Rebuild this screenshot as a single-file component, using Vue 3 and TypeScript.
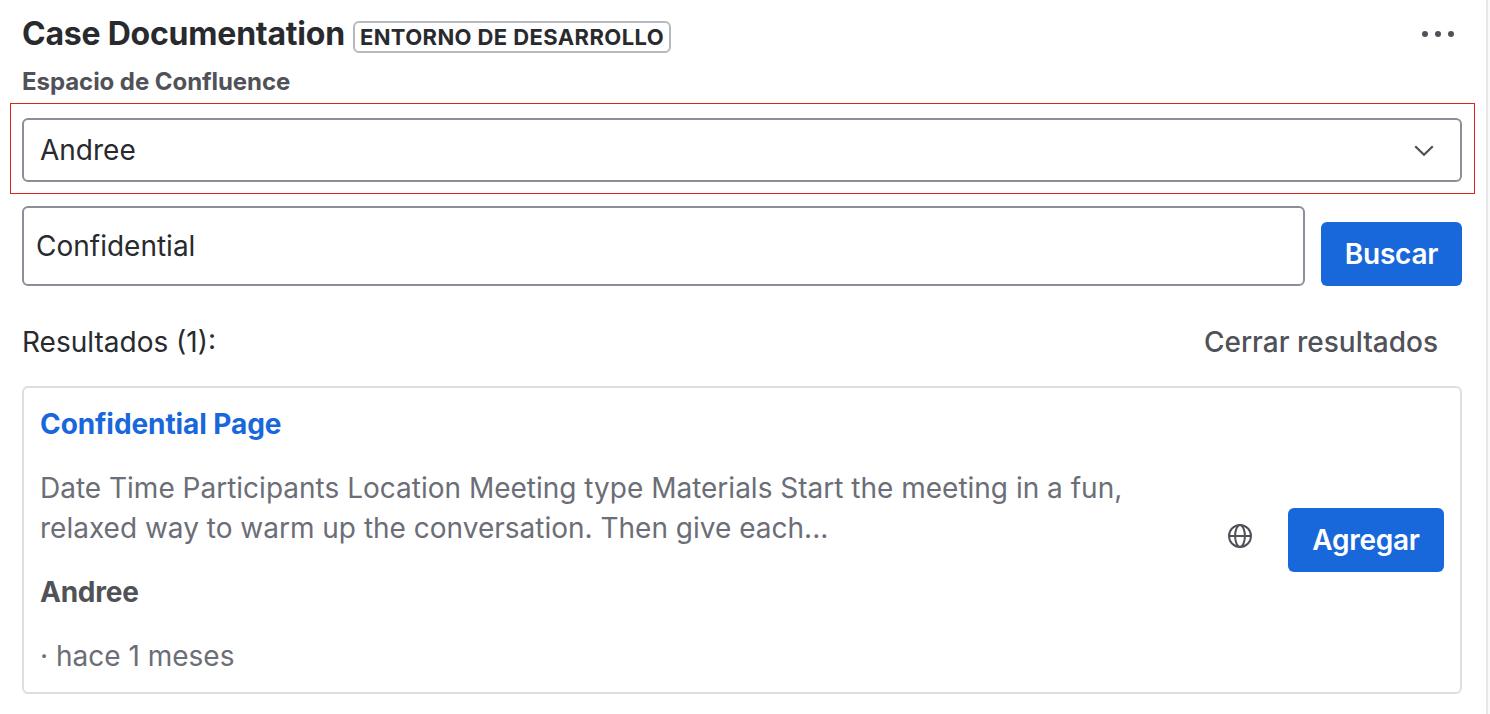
<script setup lang="ts">
  import { ref, computed } from 'vue';

  interface Result {
    id : number;
    title : string;
    excerpt : string;
    space : string;
    date : string;
  }

  const space = ref('Andree');
  const search = ref('Confidential');
  const showResults = ref(true);

  const pages : Result[] = [
    {
      id : 1,
      title : "Confidential Page",
      excerpt : "Date Time Participants Location Meeting type Materials Start the meeting in a fun, relaxed way to warm up the conversation. Then give each...",
      space : "Andree",
      date : "hace 1 meses"
    },
  ];

  const results = computed(() => showResults.value ? pages : []);

  const openResults = () => showResults.value = true;
  const closeResults = () => showResults.value = false;
</script>

<template>
  <div class="panel">
    <header class="header">
      <h1>Case Documentation</h1>
      <span class="env">ENTORNO DE DESARROLLO</span>
      <svg class="more" viewBox="0 0 32 32" fill="#505258">
        <circle cx="3" cy="16" r="3" />
        <circle cx="16" cy="16" r="3" />
        <circle cx="29" cy="16" r="3" />
      </svg>
    </header>
    <div class="label">Espacio de Confluence</div>
    <div class="space-zone">
      <div class="select">
        <span>{{ space }}</span>
        <svg class="chevron" viewBox="0 0 20 12" fill="none" stroke="#505258" stroke-width="2.2" stroke-linecap="square">
          <path d="M2 2 L10 9.8 L18 2" />
        </svg>
      </div>
    </div>
    <div class="search-row">
      <input v-model="search" type="text" class="search" />
      <button type="button" class="main-button buscar" @click="openResults">Buscar</button>
    </div>
    <div class="results-head">
      <span class="count">Resultados ({{ results.length }}):</span>
      <button type="button" class="close-button" @click="closeResults">Cerrar resultados</button>
    </div>
    <div v-for="page in results" :key="page.id" class="card">
      <div class="infos">
        <a class="page-title">{{ page.title }}</a>
        <p class="excerpt">{{ page.excerpt }}</p>
        <b class="page-space">{{ page.space }}</b>
        <span class="date">· {{ page.date }}</span>
      </div>
      <svg class="globe" viewBox="0 0 24 24" fill="none" stroke="#505258" stroke-width="2">
        <circle cx="12" cy="12" r="11" />
        <ellipse cx="12" cy="12" rx="4.9" ry="11" />
        <path d="M1 12 H23" />
      </svg>
      <button type="button" class="main-button agregar">Agregar</button>
    </div>
  </div>
</template>

<style>
  body {
    margin: 0;
    background-color: #fafafa;
  }
</style>

<style scoped>
  .panel {
    box-sizing: border-box;
    width: 1488px;
    height: 714px;
    padding: 14px 24px 0 22px;
    border-right: 2px solid #e8e8e8;
    background-color: white;
    color: #292a2e;
    font-family: Inter, sans-serif;
    font-size: 28px;
    line-height: 40px;
    overflow: hidden;
  }

  .header {
    display: flex;
    align-items: center;
    height: 40px;
  }

  h1 {
    margin: 0;
    font-size: 32px;
    font-weight: 700;
    letter-spacing: -0.22px;
    line-height: 40px;
  }

  .env {
    box-sizing: border-box;
    height: 32px;
    margin: 6px 0 0 8px;
    padding: 0 5px;
    border: 2px solid #b7b9be;
    border-radius: 6px;
    font-size: 22px;
    font-weight: 700;
    letter-spacing: 0.4px;
    line-height: 28px;
  }

  .more {
    width: 32px;
    height: 32px;
    margin-left: auto;
    margin-right: 8px;
  }

  .label {
    height: 32px;
    margin-top: 12px;
    color: #505258;
    font-size: 24px;
    font-weight: 700;
    letter-spacing: -0.06px;
    line-height: 32px;
  }

  .space-zone {
    box-sizing: border-box;
    height: 91px;
    margin: 5px -13px 0 -12px;
    padding: 14px 12px 0 11px;
    border: 1px solid #e2201c;
  }

  .select {
    box-sizing: border-box;
    display: flex;
    align-items: center;
    justify-content: space-between;
    height: 64px;
    padding: 0 26px 0 16px;
    border: 2px solid #8c8f97;
    border-radius: 6px;
  }

  .chevron {
    width: 20px;
    height: 12px;
    margin-top: 2px;
  }

  .search-row {
    display: flex;
    align-items: flex-end;
    gap: 16px;
    margin-top: 12px;
  }

  .search {
    box-sizing: border-box;
    flex: 1;
    min-width: 0;
    height: 80px;
    padding: 0 12px;
    border: 2px solid #8c8f97;
    border-radius: 6px;
    outline: none;
    background-color: white;
    color: #292a2e;
    font: inherit;
  }

  .main-button {
    flex: none;
    height: 64px;
    padding: 0;
    border: none;
    border-radius: 6px;
    background-color: #1868db;
    color: white;
    font: inherit;
    font-weight: 600;
    letter-spacing: -0.25px;
    cursor: pointer;
  }

  .main-button:hover {
    background-color: #1558bc;
  }

  .buscar {
    width: 141px;
  }

  .agregar {
    width: 156px;
    margin-left: 36px;
  }

  .results-head {
    display: flex;
    align-items: center;
    justify-content: space-between;
    height: 40px;
    margin-top: 36px;
  }

  .close-button {
    padding: 0 24px;
    border: none;
    background: none;
    color: #505258;
    font: inherit;
    font-weight: 500;
    cursor: pointer;
  }

  .card {
    box-sizing: border-box;
    display: flex;
    align-items: center;
    height: 308px;
    margin-top: 24px;
    padding: 16px;
    border: 2px solid #dddee1;
    border-radius: 6px;
  }

  .infos {
    display: flex;
    flex-direction: column;
    gap: 24px;
    width: 1110px;
    margin-right: auto;
  }

  .page-title {
    color: #1868db;
    font-weight: 700;
    letter-spacing: -0.08px;
    cursor: pointer;
  }

  .excerpt {
    margin: 0;
    color: #6b6e76;
  }

  .page-space {
    color: #505258;
    font-weight: 700;
    letter-spacing: -0.25px;
  }

  .date {
    color: #6b6e76;
  }

  .globe {
    width: 24px;
    height: 24px;
    margin-bottom: 8px;
  }
</style>
